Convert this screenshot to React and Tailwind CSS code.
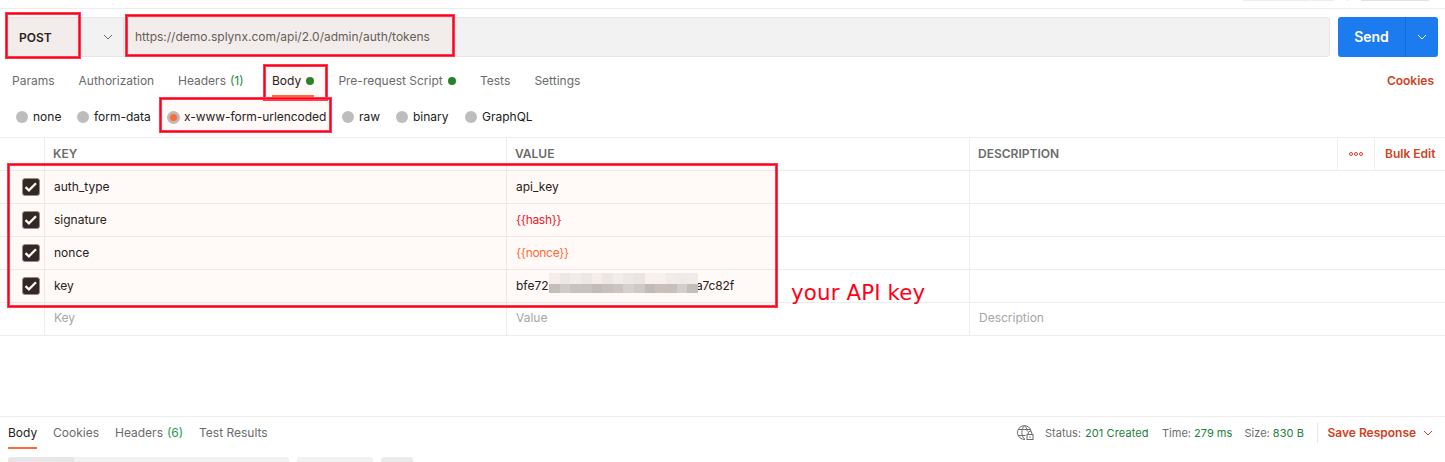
import React from "react";

const tabs = [
  { label: "Params", width: "w-[66.5px]" },
  { label: "Authorization", width: "w-[99.5px]" },
  { label: "Headers", count: "(1)", width: "w-[94px]" },
  { label: "Body", dot: true, active: true, width: "w-[66.4px]" },
  { label: "Pre-request Script", dot: true, width: "w-[141.6px]" },
  { label: "Tests", width: "w-[54.4px]" },
  { label: "Settings", width: "w-[60px]" },
];

const bodyTypes = [
  { label: "none", width: "w-[61px]" },
  { label: "form-data", width: "w-[90px]" },
  { label: "x-www-form-urlencoded", selected: true, width: "w-[175px]" },
  { label: "raw", width: "w-[54px]" },
  { label: "binary", width: "w-[69px]" },
  { label: "GraphQL", width: "w-[80px]" },
];

const rows = [
  { name: "auth_type", value: "api_key", color: "text-[#212121]" },
  { name: "signature", value: "{{hash}}", color: "text-[#e5202e] tracking-[-0.3px]" },
  { name: "nonce", value: "{{nonce}}", color: "text-[#ff6c37] tracking-[-0.3px]" },
  { name: "key", masked: true, color: "text-[#212121]" },
];

const maskTop = ["#f6edea", "#ece7e4", "#f1ece9", "#ece7e4", "#f5edea", "#ece7e4", "#f2edea", "#ece7e4", "#eae5e2", "#f7f0ed", "#f8f0ed", "#f1ece9", "#eeeae7", "#f0ebe8"];
const maskBottom = ["#c5bdba", "#d1cbc8", "#cac2bf", "#c9c1be", "#c2bbb8", "#c8c0bd", "#cdc4c0", "#d5d0cf", "#cfc9c6", "#c2bab7", "#c9c0bc", "#c8bfbb", "#d1cecd", "#c5bdba"];

function Chevron({ className }) {
  return (
    <svg viewBox="0 0 10 6" width="10" height="6" fill="none" stroke="currentColor" className={className}>
      <path d="M1 1l4 4 4-4" />
    </svg>
  );
}

function Checkbox() {
  return (
    <svg width="18" height="18" viewBox="0 0 18 18" className="ml-[22px] shrink-0">
      <rect x="0.5" y="0.5" width="17" height="17" rx="2.5" fill="#2c2725" stroke="#938e8c" />
      <path d="M3.5 9.2l3.4 3.1 7.1-7.1" fill="none" stroke="#fff" strokeWidth="2.3" />
    </svg>
  );
}

function MaskRow({ colors, className }) {
  return (
    <span className={`flex ${className}`}>
      {colors.map((c, i) => (
        <span key={i} className="flex-1" style={{ backgroundColor: c }} />
      ))}
    </span>
  );
}

function GlobeLock() {
  return (
    <svg width="17" height="16" viewBox="0 0 17 16" fill="none" stroke="#6b6b6b" strokeWidth="1">
      <path d="M8 14.4A6.9 6.9 0 1 1 14.2 6.4" />
      <path d="M8 14.4C6 13.2 4.9 10.6 4.9 7.6S6 1.8 7.5.8C9 1.8 10 3.9 10.3 6.4M1.4 4.5h12.2M1.4 10.5h7.1" />
      <rect x="10" y="9.5" width="6" height="5" />
      <path d="M11.2 9.5V8a1.8 1.8 0 0 1 3.6 0v1.5M13 11.4v1.4" />
    </svg>
  );
}

function Highlight({ className }) {
  return (
    <div className={`pointer-events-none absolute border border-[#ff3a50] bg-[#ff5014]/[0.035] shadow-[inset_0_0_0_1px_#ff0019,inset_0_0_0_2px_#ff3a50] ${className}`} />
  );
}

export default function App() {
  return (
    <div className="relative flex h-[462px] w-[1445px] flex-col overflow-hidden bg-white font-['Inter',sans-serif] text-[12px] leading-4 text-[#212121]">
      <div className="flex h-[9px] shrink-0 items-start border-b border-[#ededed] pl-[1243px]">
        <div className="mr-px h-px w-[67px] bg-[#ededed]" />
        <div className="h-px w-[23px] bg-[#ededed]" />
        <div className="ml-[13px] h-px w-px bg-[#dddddd]" />
        <div className="ml-[13px] h-px w-[68px] bg-[#e2e2e2]" />
      </div>

      <div className="mt-2 flex h-10 shrink-0 pl-[7px] pr-[7px]">
        <div className="flex w-[1323px] rounded-[3px] border border-[#e6e6e6] bg-[#f2f2f2]">
          <div className="flex w-[116px] items-center justify-between border-r border-[#e0e0e0] pl-[11px] pr-[10px]">
            <span className="pt-px font-semibold">POST</span>
            <Chevron className="text-[#6b6b6b]" />
          </div>
          <div className="flex items-center pl-[11px] text-[#5f5f5f]">
            https://demo.splynx.com/api/2.0/admin/auth/tokens
          </div>
        </div>
        <div className="ml-2 flex w-[100px] rounded-[3px] bg-[#1d7bf0] text-white">
          <div className="flex w-[68px] items-center justify-center border-r border-[#166ad6] text-[14px] font-semibold">
            Send
          </div>
          <div className="flex flex-1 items-center justify-center">
            <Chevron />
          </div>
        </div>
      </div>

      <div className="flex h-10 shrink-0 pl-3 pr-[11px] pt-[7px]">
        {tabs.map((t) => (
          <div key={t.label} className={`flex shrink-0 ${t.width}`}>
            <div className={`flex items-center whitespace-nowrap border-b-2 pt-0.5 ${t.active ? "border-[#ff6c37] text-[#212121]" : "border-transparent text-[#6b6b6b]"}`}>
              {t.label}
              {t.count && <span className="ml-1 text-[#1c8a3f]">{t.count}</span>}
              {t.dot && <span className="ml-[5px] h-2 w-2 rounded-full bg-[#26832c]" />}
            </div>
          </div>
        ))}
        <div className="ml-auto flex items-center font-semibold text-[#d2411e]">Cookies</div>
      </div>

      <div className="flex h-10 shrink-0 items-center pl-4">
        {bodyTypes.map((b) => (
          <div key={b.label} className={`flex shrink-0 items-center whitespace-nowrap ${b.width} ${b.selected ? "gap-1 tracking-[-0.05px]" : "gap-[5px]"}`}>
            <span className={`flex shrink-0 items-center justify-center rounded-full bg-[#bdbdbd] ${b.selected ? "h-[13px] w-[13px]" : "h-3 w-3"}`}>
              {b.selected && <span className="h-[7px] w-[7px] rounded-full bg-[#ff6c37]" />}
            </span>
            {b.label}
          </div>
        ))}
      </div>

      <div className="flex shrink-0 flex-col border-t border-[#ededed]">
        <div className="flex h-[33px] border-b border-[#ededed] font-semibold text-[#6b6b6b]">
          <div className="w-[45px] border-r border-[#ededed]" />
          <div className="flex w-[462px] items-center border-r border-[#ededed] pl-2">KEY</div>
          <div className="flex w-[463px] items-center border-r border-[#ededed] pl-2">VALUE</div>
          <div className="flex w-[368px] items-center border-r border-[#ededed] pl-2">DESCRIPTION</div>
          <div className="flex w-[37px] items-center justify-center border-r border-[#ededed]">
            <svg width="16" height="6" viewBox="0 0 16 6" fill="none" stroke="#d2411e">
              <circle cx="3" cy="3" r="1.5" />
              <circle cx="8" cy="3" r="1.5" />
              <circle cx="13" cy="3" r="1.5" />
            </svg>
          </div>
          <div className="flex items-center whitespace-nowrap pl-[10px] text-[#d2411e]">Bulk Edit</div>
        </div>
        {rows.map((r) => (
          <div key={r.name} className="flex h-[33px] border-b border-[#ededed]">
            <div className="flex w-[45px] items-center border-r border-[#ededed]">
              <Checkbox />
            </div>
            <div className="flex w-[462px] items-center border-r border-[#ededed] pl-[9px]">{r.name}</div>
            <div className={`flex w-[463px] items-center border-r border-[#ededed] pl-[9px] ${r.color}`}>
              {r.masked ? (
                <>
                  <span className="w-[33px]">bfe72</span>
                  <span className="z-10 mt-[3px] flex h-5 w-[149px] flex-col self-start">
                    <MaskRow colors={maskTop} className="h-[11px]" />
                    <MaskRow colors={maskBottom} className="h-[9px]" />
                  </span>
                  <span className="-ml-0.5 tracking-[-0.15px]">a7c82f</span>
                </>
              ) : (
                r.value
              )}
            </div>
          </div>
        ))}
        <div className="flex h-[33px] border-b border-[#ededed] text-[#a6a6a6]">
          <div className="w-[45px] border-r border-[#ededed]" />
          <div className="flex w-[462px] items-center border-r border-[#ededed] pb-0.5 pl-[9px]">Key</div>
          <div className="flex w-[463px] items-center border-r border-[#ededed] pb-0.5 pl-[9px]">Value</div>
          <div className="flex items-center pb-0.5 pl-[9px]">Description</div>
        </div>
      </div>

      <div className="mt-20 flex h-[33px] shrink-0 border-t border-[#ededed] pl-2 text-[#6b6b6b]">
        <div className="flex w-[45px]">
          <div className="flex items-center border-b-2 border-[#ff6c37] pt-0.5 text-[#212121]">Body</div>
        </div>
        <div className="flex w-[62px] items-center">Cookies</div>
        <div className="flex w-[84px] items-center gap-1">
          Headers <span className="text-[#1c9c4c]">(6)</span>
        </div>
        <div className="flex items-center">Test Results</div>
        <div className="ml-auto flex w-[429px] items-center text-[11px]">
          <div className="w-[29px] pl-px">
            <GlobeLock />
          </div>
          <div className="flex w-[117px]">
            Status:<span className="ml-1 tracking-[0.1px] text-[#20803c]">201 Created</span>
          </div>
          <div className="w-[82.5px]">
            Time: <span className="text-[#20803c]">279 ms</span>
          </div>
          <div className="w-[72px]">
            Size: <span className="tracking-[0.1px] text-[#20803c]">830 B</span>
          </div>
          <div className="flex h-5 items-center border-l border-[#e6e6e6] pl-[10px] text-[12px] font-semibold text-[#d2411e]">
            Save Response
            <Chevron className="ml-[6.5px]" />
          </div>
        </div>
      </div>

      <div className="mt-2 flex h-[5px] shrink-0 pl-2">
        <div className="w-[66px] rounded-tl-[3px] bg-[#e6e6e6]" />
        <div className="w-[215px] rounded-tr-[3px] bg-[#f2f2f2]" />
        <div className="ml-2 w-[76px] rounded-t-[3px] bg-[#f2f2f2]" />
        <div className="ml-2 w-8 rounded-t-[3px] bg-[#ebebeb]" />
      </div>

      <Highlight className="left-[5px] top-[12px] h-[47px] w-[76px]" />
      <Highlight className="left-[125px] top-[14px] h-[43px] w-[330px]" />
      <Highlight className="left-[263px] top-[64px] h-[37px] w-[65px]" />
      <Highlight className="left-[159px] top-[97px] h-[36px] w-[173px]" />
      <Highlight className="left-[7px] top-[163px] h-[145px] w-[771px]" />
      <div className="absolute left-[791px] top-[279px] whitespace-nowrap font-['DejaVu_Sans',sans-serif] text-[21.33px] leading-7 tracking-[0.15px] text-[#ff0019]">
        your API key
      </div>
    </div>
  );
}
